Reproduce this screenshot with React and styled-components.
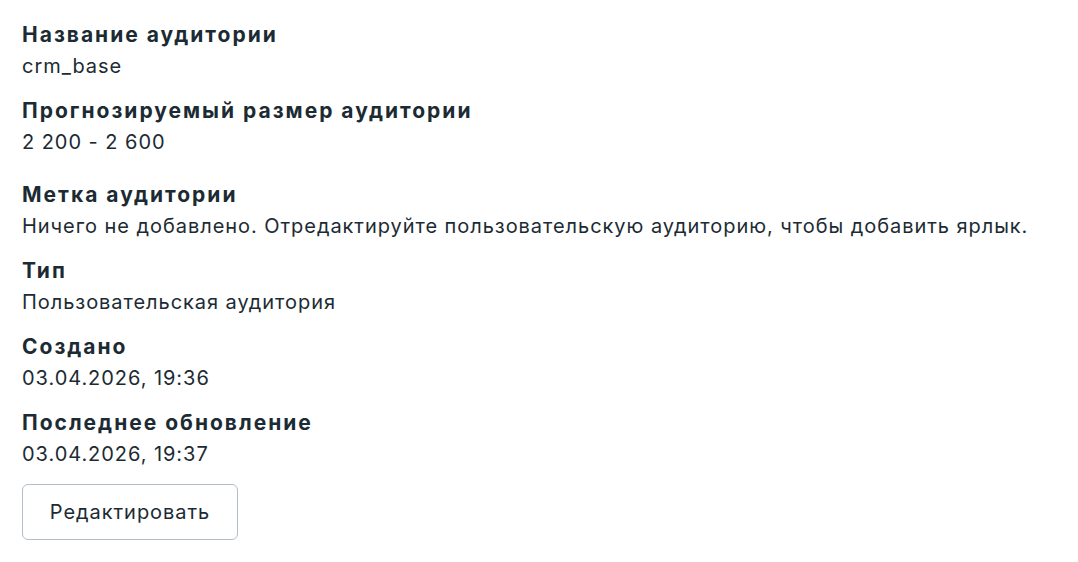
import React from "react";
import styled, { createGlobalStyle } from "styled-components";

const Global = createGlobalStyle`
  html, body { margin: 0; padding: 0; background: #fff; }
  body {
    font-family: Inter, "Noto Sans", sans-serif;
    color: #1c2b33;
    -webkit-font-smoothing: antialiased;
  }
`;

const Page = styled.main`
  padding: 23px 22px;
  display: flex;
  flex-direction: column;
  align-items: flex-start;
`;

const Field = styled.section`
  display: flex;
  flex-direction: column;
  gap: 7px;
  margin-top: ${(p) => (p.$first ? 0 : p.$extra ? 29 : 21)}px;
`;

const Label = styled.h3`
  margin: 0;
  font-size: 21px;
  line-height: 24px;
  font-weight: 700;
  letter-spacing: 2px;
  color: #1c2b33;
  white-space: nowrap;
`;

const Value = styled.div`
  font-size: 20px;
  line-height: 24px;
  font-weight: 400;
  letter-spacing: 0.95px;
  color: #1c2b33;
  white-space: nowrap;
`;

const Button = styled.button`
  margin-top: 18px;
  height: 56px;
  width: 216px;
  padding: 0;
  border: 1px solid #b4bec8;
  border-radius: 6px;
  background: #fff;
  font-family: inherit;
  font-size: 20px;
  letter-spacing: 0.95px;
  color: #1c2b33;
  cursor: pointer;
`;

const fields = [
  { label: "Название аудитории", value: "crm_base" },
  { label: "Прогнозируемый размер аудитории", value: "2 200 - 2 600" },
  {
    label: "Метка аудитории",
    value:
      "Ничего не добавлено. Отредактируйте пользовательскую аудиторию, чтобы добавить ярлык.",
    extra: true,
  },
  { label: "Тип", value: "Пользовательская аудитория" },
  { label: "Создано", value: "03.04.2026, 19:36" },
  { label: "Последнее обновление", value: "03.04.2026, 19:37" },
];

export default function App() {
  return (
    <>
      <Global />
      <Page>
        {fields.map((f, i) => (
          <Field key={f.label} $first={i === 0} $extra={f.extra}>
            <Label>{f.label}</Label>
            <Value>{f.value}</Value>
          </Field>
        ))}
        <Button>Редактировать</Button>
      </Page>
    </>
  );
}
